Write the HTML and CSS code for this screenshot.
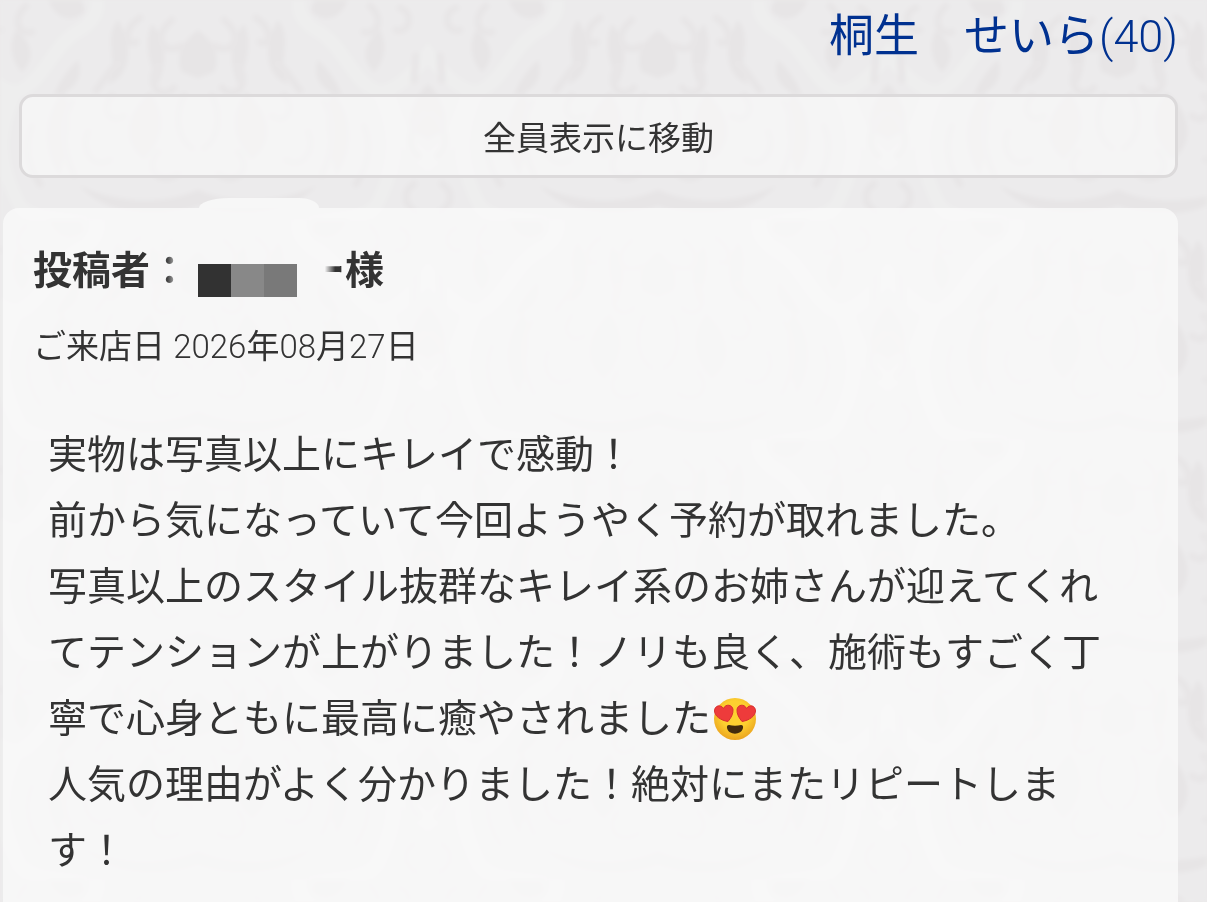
FILE: index.html
```html
<!DOCTYPE html>
<html lang="ja">
<head>
<meta charset="utf-8">
<meta name="viewport" content="width=device-width, initial-scale=1">
<title>口コミ</title>
<link rel="stylesheet" href="styles.css">
</head>
<body>
<svg class="damask" aria-hidden="true">
  <defs>
    <g id="half-motif">
      <path class="ribbon" d="M-10 40C10 70 30 90 48 92C76 84 84 44 112 30C136 16 130 -6 124 -20M48 92C30 130 28 160 52 206C70 226 110 214 130 232M44 84C30 130 20 150 -8 168"/>
      <path class="petal" d="M78 -8C100 -14 118 -4 116 12C104 24 84 20 78 -8ZM230 30C216 40 206 56 214 72L230 78ZM150 20C134 40 152 60 140 84C160 78 168 50 150 20ZM96 92C76 110 72 150 92 176C98 148 108 120 96 92ZM182 92C160 110 150 140 176 160C196 140 200 116 182 92ZM112 186C140 200 190 208 230 190V206C190 220 140 216 112 186ZM48 30C40 46 44 62 54 72C66 60 66 44 48 30ZM184 24C176 40 180 60 190 84C200 60 198 40 184 24ZM110 60C96 74 90 84 86 96C104 92 116 80 110 60ZM0 84C12 96 20 110 18 130L0 140Z"/>
      <path class="curl" d="M204 20C184 36 194 56 214 46M172 18C154 28 158 48 168 42M144 96C132 108 142 126 156 116M190 66C178 82 190 102 206 88M28 8C14 12 18 34 32 30M12 56L14 80M104 102C92 120 94 150 106 174M216 96C206 116 210 140 224 148M120 132C112 148 124 170 142 160M190 152C176 168 190 186 210 174M150 64C140 70 136 82 128 90M58 6C44 18 50 36 64 32M4 114C18 126 22 146 10 156M14 184C24 190 26 204 12 212M64 126C56 146 60 166 72 184"/>
    </g>
    <pattern id="damask-tile" width="460" height="220" patternUnits="userSpaceOnUse" x="-32" y="0">
      <rect class="ground" width="460" height="220"/>
      <use href="#half-motif"/>
      <use href="#half-motif" transform="translate(460 0) scale(-1 1)"/>
    </pattern>
  </defs>
  <rect width="100%" height="100%" fill="url(#damask-tile)"/>
</svg>
<main class="page">
  <a class="cast-link" href="#cast">桐生　せいら<span class="thin">(40)</span></a>
  <button class="show-all" type="button">全員表示に移動</button>
  <article class="review">
    <h2 class="author">投稿者<span class="colon">：</span><span class="masked"><i class="block dark"></i><i class="block mid"></i><i class="block soft"></i></span><span class="tail">ー</span>様</h2>
    <p class="visit">ご来店日 <span class="thin">2026</span>年<span class="thin">08</span>月<span class="thin">27</span>日</p>
    <p class="comment">実物は写真以上にキレイで感動！<br>前から気になっていて今回ようやく予約が取れました。<br>写真以上のスタイル抜群なキレイ系のお姉さんが迎えてくれてテンションが上がりました！ノリも良く、施術もすごく丁寧で心身ともに最高に癒やされました<svg class="emoji" viewBox="0 0 46 46" role="img" aria-label="ハート目の笑顔"><defs><radialGradient id="face" cx=".5" cy=".4" r=".6"><stop offset=".55" stop-color="#fdd030"/><stop offset="1" stop-color="#eba41f"/></radialGradient></defs><circle cx="23" cy="23" r="21" fill="url(#face)"/><path d="M16 25.500C9 24.500 2.500 20 2.500 15C2.500 9.500 8.500 8 11.500 12.500C13.500 7.500 20.500 8.500 21 13.500C21.300 18 19 22 16 25.500Z" fill="#ee3b3b" stroke="#d5302f"/><path d="M30 25.500C37 24.500 43.500 20 43.500 15C43.500 9.500 37.500 8 34.500 12.500C32.500 7.500 25.500 8.500 25 13.500C24.700 18 27 22 30 25.500Z" fill="#ee3b3b" stroke="#d5302f"/><path d="M17 29Q23 30.500 29 29Q31.500 29 31 32C29.500 39.500 16.500 39.500 15 32Q14.500 29 17 29Z" fill="#422b0d"/></svg><br>人気の理由がよく分かりました！絶対にまたリピートします！</p>
  </article>
</main>
</body>
</html>
```
FILE: styles.css
```css
* {
  box-sizing: border-box;
}

body {
  margin: 0;
  background: #ebeaea;
  color: #333;
  font-family: Roboto, "Noto Sans CJK JP", sans-serif;
}

.damask {
  position: fixed;
  inset: 0;
  z-index: -1;
  width: 100%;
  height: 100%;
  filter: blur(2px);
}

.ground {
  fill: #ecebec;
}

.petal {
  fill: #e7e5e6;
}

.ribbon {
  fill: none;
  stroke: #eeeeee;
  stroke-width: 14;
}

.curl {
  fill: none;
  stroke: #e8e6e7;
  stroke-width: 7;
  stroke-linecap: round;
}

.page {
  display: flex;
  flex-direction: column;
  min-height: 100vh;
  padding: 7px 29px 0 3px;
}

.cast-link {
  align-self: flex-end;
  color: #003190;
  font-size: 45px;
  line-height: 60px;
  text-decoration: none;
}

.thin {
  font-weight: 300;
}

.show-all {
  margin: 27px 0 30px 16px;
  padding: 17px 14px 11px;
  border: 3px solid #dcdadb;
  border-radius: 14px;
  background: rgb(250 250 250 / 65%);
  color: inherit;
  font: inherit;
  font-size: 33px;
  line-height: 50px;
}

.review {
  position: relative;
  flex: 1;
  padding: 30px;
  border-radius: 16px 16px 0 0;
  background: rgb(250 250 250 / 80%);
}

.review::before {
  content: "";
  position: absolute;
  top: -10px;
  left: 196px;
  width: 120px;
  height: 10px;
  border-radius: 30px 20px 0 0 / 10px 10px 0 0;
  background: #f7f7f7;
}

.author {
  display: flex;
  align-items: center;
  margin: 0;
  font-size: 39px;
  line-height: 66px;
}

.colon {
  background: linear-gradient(90deg, #444 45%, #999 60%);
  background-clip: text;
  color: transparent;
}

.masked {
  display: flex;
  width: 117px;
  padding: 18px 9px 0;
}

.block {
  width: 33px;
  height: 33px;
}

.dark {
  background: #323232;
}

.mid {
  background: #888;
}

.soft {
  background: #797979;
}

.tail {
  background: linear-gradient(90deg, transparent 48%, #333 75%);
  background-clip: text;
  color: transparent;
}

.visit {
  margin: 18px 0 0;
  font-size: 33px;
  line-height: 50px;
}

.comment {
  margin: 50px 15px 0;
  font-size: 39px;
  line-height: 66px;
}

.emoji {
  width: 46px;
  height: 46px;
  margin: 0 1px;
  vertical-align: -10px;
}
```
